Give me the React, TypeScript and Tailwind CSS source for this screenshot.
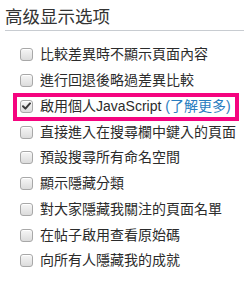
import React from "react";

const items: { label: React.ReactNode; checked?: boolean; highlight?: boolean }[] = [
  { label: "比較差異時不顯示頁面內容" },
  { label: "進行回退後略過差異比較" },
  {
    label: (
      <>
        啟用個人JavaScript <span className="text-[#2a7dbf]">(了解更多)</span>
      </>
    ),
    checked: true,
    highlight: true,
  },
  { label: "直接進入在搜尋欄中鍵入的頁面" },
  { label: "預設搜尋所有命名空間" },
  { label: "顯示隱藏分類" },
  { label: "對大家隱藏我關注的頁面名單" },
  { label: "在帖子啟用查看原始碼" },
  { label: "向所有人隱藏我的成就" },
];

function Box({ checked }: { checked?: boolean }) {
  return (
    <span className="relative flex h-[13px] w-[13px] shrink-0 items-center justify-center rounded-[3px] border border-[#a8a8a8] bg-gradient-to-b from-[#f6f6f6] to-[#dcdcdc] shadow-[inset_0_1px_0_#fff]">
      {checked && (
        <svg width="9" height="8" viewBox="0 0 9 8">
          <path d="M1 4.2 L3.4 6.6 L8 1.4" stroke="#3a3a3a" strokeWidth="2" fill="none" strokeLinecap="round" strokeLinejoin="round" />
        </svg>
      )}
    </span>
  );
}

export default function App() {
  return (
    <div
      className="h-[285px] w-[244px] overflow-hidden bg-white"
      style={{ fontFamily: '"Liberation Sans", "Noto Sans CJK TC", sans-serif' }}
    >
      <div className="pl-[5px] pt-[6px]">
        <h2 className="border-b border-[#c8ccd1] pb-[2px] text-[17.5px] leading-[22px] text-[#333]">高级显示选项</h2>
      </div>
      <div className="mt-[11px] flex flex-col">
        {items.map((it, i) => (
          <div key={i} className="relative flex h-[25.75px] items-center gap-[7px] pl-[20px] text-[14px] text-[#2b2b2b]">
            {it.highlight && (
              <span className="pointer-events-none absolute left-[13px] right-[5px] top-[-1px] bottom-[-2px] border-[4px] border-[#f5047f]" />
            )}
            <Box checked={it.checked} />
            <span className="whitespace-nowrap">{it.label}</span>
          </div>
        ))}
      </div>
    </div>
  );
}
